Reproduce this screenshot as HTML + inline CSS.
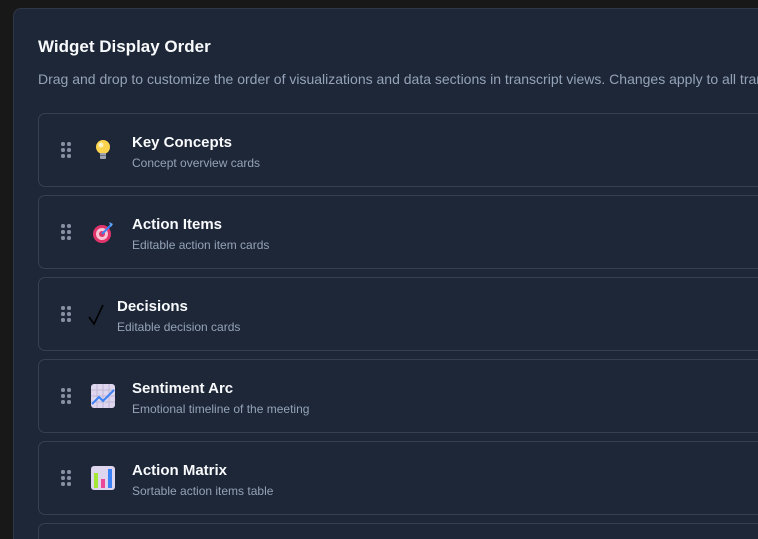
<!DOCTYPE html>
<html><head><style>
*{margin:0;padding:0;box-sizing:border-box}
html,body{width:758px;height:539px;overflow:hidden}
body{background:#181818;font-family:"Liberation Sans",sans-serif}
#w{position:relative;width:758px;height:539px;overflow:hidden}
.panel{position:absolute;left:13px;top:8px;width:745px;height:531px;background:#1e2738;border:1px solid #2f3846;border-right:none;border-bottom:none;border-radius:8px 0 0 0}
h1{position:absolute;left:38px;top:37px;font-size:17px;font-weight:bold;color:#f8fafc}
.sub{position:absolute;left:38px;top:71px;width:720px;overflow:hidden;font-size:14px;color:#94a3b8;white-space:nowrap}
.row{position:absolute;left:38px;width:720px;height:74px;border:1px solid #36404f;border-right:none;border-radius:7px 0 0 7px;background:#1e2738}
.grip{position:absolute;left:22px;top:28px;width:10px;height:16px}
.grip i{position:absolute;width:3.5px;height:3.5px;border-radius:50%;background:#8591a3}
.ic{position:absolute;left:52px;top:24px;width:24px;height:24px}
.t{position:absolute;left:93px;top:20px;font-size:15px;font-weight:bold;color:#f8fafc}
.d{position:absolute;left:93px;top:42px;font-size:12px;color:#94a3b8}
</style></head><body><div id="w">
<div class="panel"></div>
<h1>Widget Display Order</h1>
<div class="sub">Drag and drop to customize the order of visualizations and data sections in transcript views. Changes apply to all transcripts.</div>

<div class="row" style="top:113px">
<div class="grip"><i style="left:0;top:0"></i><i style="left:6px;top:0"></i><i style="left:0;top:6px"></i><i style="left:6px;top:6px"></i><i style="left:0;top:12px"></i><i style="left:6px;top:12px"></i></div>
<svg class="ic" viewBox="0 0 24 24"><circle cx="12" cy="9" r="7" fill="#fcd34d"/><circle cx="10" cy="7" r="2.5" fill="#fef3c7"/><rect x="9" y="15" width="6" height="6" rx="1" fill="#9ca3af"/><rect x="9" y="17" width="6" height="1" fill="#6b7280"/></svg>
<div class="t">Key Concepts</div><div class="d">Concept overview cards</div></div>

<div class="row" style="top:195px">
<div class="grip"><i style="left:0;top:0"></i><i style="left:6px;top:0"></i><i style="left:0;top:6px"></i><i style="left:6px;top:6px"></i><i style="left:0;top:12px"></i><i style="left:6px;top:12px"></i></div>
<svg class="ic" viewBox="0 0 24 24"><circle cx="11" cy="14" r="9" fill="#e0356a"/><circle cx="11" cy="14" r="6" fill="#f9c5d5"/><circle cx="11" cy="14" r="3" fill="#e0356a"/><path d="M11 14L20 5" stroke="#3b82f6" stroke-width="2"/><path d="M18 2l4 2-2 3z" fill="#60a5fa"/></svg>
<div class="t">Action Items</div><div class="d">Editable action item cards</div></div>

<div class="row" style="top:277px">
<div class="grip"><i style="left:0;top:0"></i><i style="left:6px;top:0"></i><i style="left:0;top:6px"></i><i style="left:6px;top:6px"></i><i style="left:0;top:12px"></i><i style="left:6px;top:12px"></i></div>
<svg class="ic" viewBox="0 0 24 24" style="left:48px"><path d="M2 15l5 7L16 3" stroke="#000" stroke-width="1.6" fill="none"/></svg>
<div class="t" style="left:78px">Decisions</div><div class="d" style="left:78px">Editable decision cards</div></div>

<div class="row" style="top:359px">
<div class="grip"><i style="left:0;top:0"></i><i style="left:6px;top:0"></i><i style="left:0;top:6px"></i><i style="left:6px;top:6px"></i><i style="left:0;top:12px"></i><i style="left:6px;top:12px"></i></div>
<svg class="ic" viewBox="0 0 24 24"><rect x="0" y="0" width="24" height="24" rx="3" fill="#ddd6ee"/><path d="M6 0v24M12 0v24M18 0v24M0 6h24M0 12h24M0 18h24" stroke="#b9b0cf" stroke-width=".8"/><path d="M1 20l7-7 4 4 11-11" stroke="#3b82f6" stroke-width="2" fill="none"/></svg>
<div class="t">Sentiment Arc</div><div class="d">Emotional timeline of the meeting</div></div>

<div class="row" style="top:441px">
<div class="grip"><i style="left:0;top:0"></i><i style="left:6px;top:0"></i><i style="left:0;top:6px"></i><i style="left:6px;top:6px"></i><i style="left:0;top:12px"></i><i style="left:6px;top:12px"></i></div>
<svg class="ic" viewBox="0 0 24 24"><rect width="24" height="24" rx="3" fill="#ddd6ee"/><rect x="3" y="7" width="4" height="15" fill="#a3e635"/><rect x="10" y="13" width="4" height="9" fill="#ec4899"/><rect x="17" y="3" width="4" height="19" fill="#3b82f6"/></svg>
<div class="t">Action Matrix</div><div class="d">Sortable action items table</div></div>

<div class="row" style="top:523px;height:16px;border-bottom:none;border-radius:7px 0 0 0"></div>
</div></body></html>
